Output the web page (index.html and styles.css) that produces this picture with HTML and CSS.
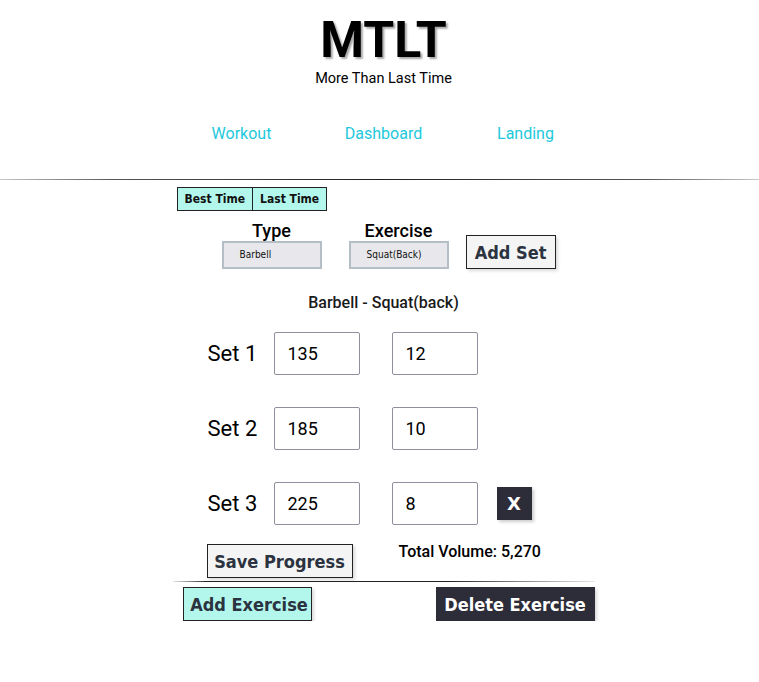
FILE: index.html
```html
<!DOCTYPE html>
<html>
<head>
<meta charset="utf-8">
<title>MTLT</title>
<link rel="stylesheet" href="styles.css">
</head>
<body>
<header class="header">
  <h1 class="logo">MTLT</h1>
  <p class="tagline">More Than Last Time</p>
  <nav class="nav">
    <a href="#" class="nav-link">Workout</a>
    <a href="#" class="nav-link">Dashboard</a>
    <a href="#" class="nav-link">Landing</a>
  </nav>
</header>
<hr class="rule rule-top">
<main class="workout">
  <div class="tabs">
    <button class="tab">Best Time</button><button class="tab">Last Time</button>
  </div>
  <div class="pickers">
    <div class="picker">
      <label class="picker-label">Type</label>
      <div class="select">Barbell</div>
    </div>
    <div class="picker">
      <label class="picker-label">Exercise</label>
      <div class="select">Squat(Back)</div>
    </div>
    <button class="btn btn-light btn-addset">Add Set</button>
  </div>
  <h2 class="exercise-title">Barbell - Squat(back)</h2>
  <div class="sets">
    <div class="set-row">
      <span class="set-label">Set 1</span>
      <input class="set-input" value="135">
      <input class="set-input" value="12">
    </div>
    <div class="set-row">
      <span class="set-label">Set 2</span>
      <input class="set-input" value="185">
      <input class="set-input" value="10">
    </div>
    <div class="set-row">
      <span class="set-label">Set 3</span>
      <input class="set-input" value="225">
      <input class="set-input" value="8">
      <button class="btn-x">X</button>
    </div>
  </div>
  <div class="summary">
    <button class="btn btn-light btn-save">Save Progress</button>
    <span class="total">Total Volume: 5,270</span>
  </div>
  <hr class="rule rule-bottom">
  <div class="actions">
    <button class="btn btn-aqua">Add Exercise</button>
    <button class="btn btn-dark">Delete Exercise</button>
  </div>
</main>
</body>
</html>
```
FILE: styles.css
```css
html, body {
  margin: 0;
  padding: 0;
}
body {
  padding-left: 8px;
  font-family: Roboto, "Liberation Sans", sans-serif;
  color: #000;
  background: #fff;
}
.header {
  display: flex;
  flex-direction: column;
  align-items: center;
  padding-top: 12px;
}
.logo {
  margin: 0;
  font-size: 50px;
  line-height: 56px;
  font-weight: 700;
  text-shadow: 2px 2px 2px rgba(0,0,0,0.35);
}
.tagline {
  margin: 3px 0 0;
  font-size: 14.5px;
  line-height: 16px;
}
.nav {
  display: flex;
  justify-content: center;
  margin-top: 37px;
}
.nav-link {
  width: 142px;
  text-align: center;
  color: #22c8dc;
  text-decoration: none;
  font-size: 16px;
  line-height: 19px;
}
.rule {
  border: 0;
  height: 1px;
  margin: 0;
}
.rule-top {
  margin-top: 36px;
  margin-left: -8px;
  background: linear-gradient(to right, #c8c8c8, #555 15%, #222 50%, #555 85%, #c8c8c8);
}
.workout {
  width: 422px;
  margin: 0 auto;
  display: flex;
  flex-direction: column;
}
.tabs {
  display: flex;
  margin: 7px 0 0 4px;
}
.tab {
  margin: 0;
  height: 24px;
  padding: 0 7px;
  background: #b3f7ec;
  border: 1px solid #222;
  font-family: "DejaVu Sans Condensed", "DejaVu Sans", sans-serif;
  font-weight: 700;
  font-size: 12px;
  color: #111;
}
.tab + .tab {
  border-left: 0;
}
.pickers {
  display: flex;
  align-items: flex-end;
  margin: 9px 0 0 49px;
}
.picker {
  display: flex;
  flex-direction: column;
  align-items: center;
  margin-right: 27px;
}
.picker + .picker {
  margin-right: 17px;
}
.picker-label {
  font-size: 18px;
  font-weight: 500;
  line-height: 21px;
}
.select {
  box-sizing: border-box;
  width: 100px;
  height: 28px;
  background: #e8e8ec;
  border: 2px solid #b4bec6;
  font-family: "DejaVu Sans Condensed", "DejaVu Sans", sans-serif;
  font-size: 10px;
  line-height: 24px;
  padding-left: 16px;
  color: #111;
}
.btn {
  box-sizing: border-box;
  font-family: "DejaVu Sans Condensed", "DejaVu Sans", sans-serif;
  font-weight: 700;
  font-size: 18px;
  white-space: nowrap;
  text-align: center;
  border: 1px solid #222;
  box-shadow: 2px 2px 3px rgba(0,0,0,0.15);
  padding: 0;
  margin: 0;
  color: #2b3340;
}
.btn-light {
  background: #f4f4f4;
}
.btn-addset {
  width: 90px;
  height: 34px;
}
.exercise-title {
  margin: 24px 0 0;
  text-align: center;
  font-size: 16px;
  font-weight: 500;
  line-height: 19px;
  color: #1a1a1a;
}
.sets {
  display: flex;
  flex-direction: column;
  gap: 32px;
  margin: 20px 0 0 35px;
}
.set-row {
  display: flex;
  align-items: center;
}
.set-label {
  width: 66px;
  font-size: 22px;
  line-height: 24px;
}
.set-input {
  box-sizing: border-box;
  width: 86px;
  height: 43px;
  margin: 0 32px 0 0;
  border: 1px solid #8f8f9d;
  border-radius: 2px;
  padding: 0 13px;
  font-family: Roboto, sans-serif;
  font-size: 18px;
  color: #000;
  background: #fff;
}
.set-input + .set-input {
  margin-right: 19px;
}
.btn-x {
  width: 35px;
  height: 33px;
  margin: 0;
  padding: 0;
  border: 0;
  background: #2d2d3a;
  color: #fff;
  font-family: "DejaVu Sans", sans-serif;
  font-weight: 700;
  font-size: 18px;
  box-shadow: 2px 2px 3px rgba(0,0,0,0.2);
}
.summary {
  display: flex;
  align-items: flex-start;
  margin: 19px 0 0 34px;
}
.btn-save {
  height: 34px;
  width: 146px;
}
.total {
  margin: 0 0 0 46px;
  font-size: 16px;
  font-weight: 500;
  line-height: 15px;
}
.rule-bottom {
  margin-top: 3px;
  background: linear-gradient(to right, #e8e8e8, #222 8%, #222 65%, #e8e8e8);
}
.actions {
  display: flex;
  justify-content: space-between;
  margin: 5px 0 0 10px;
}
.btn-aqua {
  background: #b3f7ec;
  height: 34px;
  width: 129px;
  padding-left: 4px;
}
.btn-dark {
  background: #2d2d3a;
  color: #fff;
  height: 34px;
  width: 159px;
  border-color: #2d2d3a;
}
```
